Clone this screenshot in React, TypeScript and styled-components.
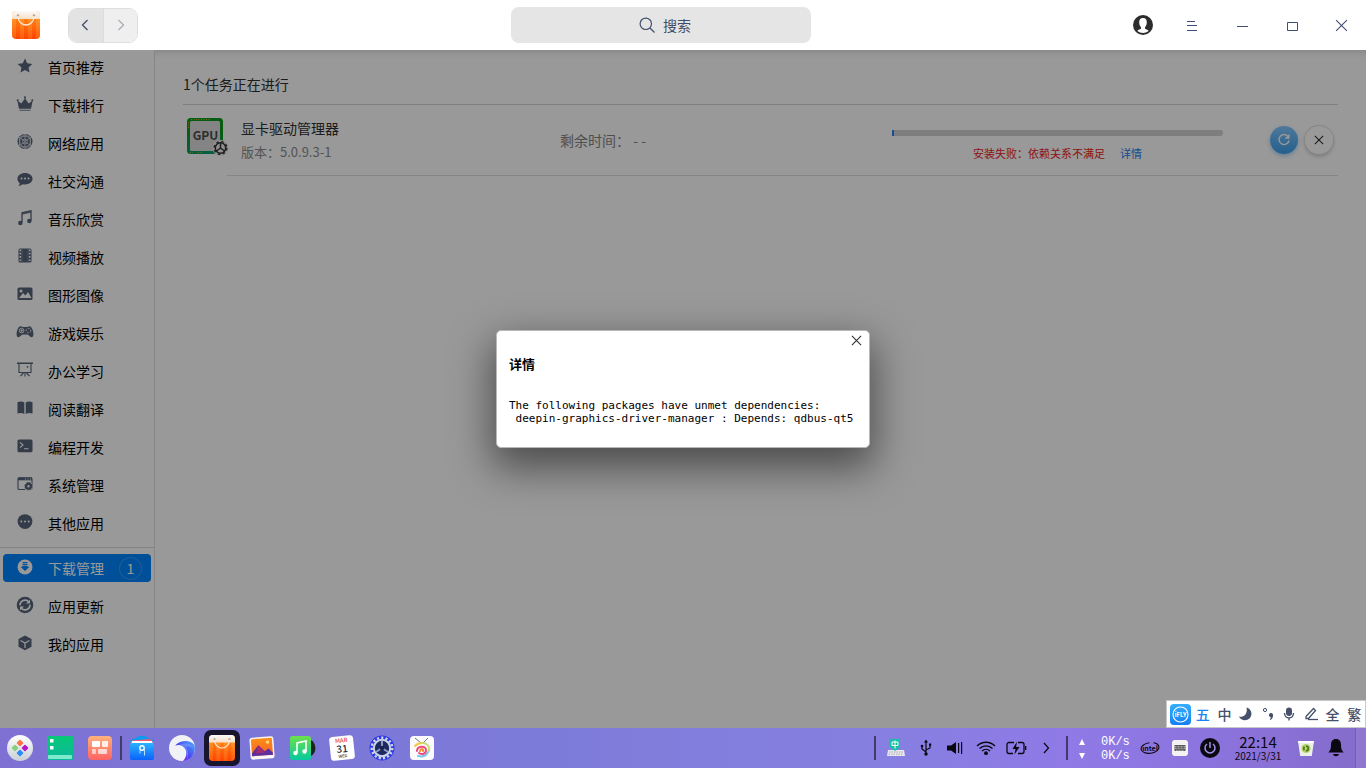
import React from "react";
import styled, { createGlobalStyle } from "styled-components";

const sans = `"Noto Sans CJK SC", "Noto Sans", sans-serif`;
const mono = `"DejaVu Sans Mono", monospace`;

const GlobalStyle = createGlobalStyle`
  *, *::before, *::after { box-sizing: border-box; }
  body { margin: 0; background: #fff; font-family: ${sans}; font-size: 14px; line-height: 20px; color: #000; }
  button { font: inherit; color: inherit; border: 0; padding: 0; background: none; cursor: pointer; }
  svg { display: block; flex: none; }
`;

const Page = styled.div`
  min-height: 100vh;
  display: flex;
  flex-direction: column;
`;

/* ---------- title bar ---------- */

const TitleBar = styled.header`
  height: 50px;
  flex: none;
  display: flex;
  align-items: center;
  background: #fff;
`;

const Brand = styled.div`
  width: 206px;
  flex: none;
  display: flex;
  align-items: center;
  gap: 28px;
  padding-left: 12px;
`;

const History = styled.div`
  display: flex;
  border-radius: 9px;
  overflow: hidden;
  border: 1px solid #dedede;
`;

const HistoryButton = styled.button<{ $active?: boolean }>`
  width: 34px;
  height: 33px;
  display: grid;
  place-items: center;
  background: ${(p) => (p.$active ? "#e3e3e3" : "#efefef")};
  color: ${(p) => (p.$active ? "#414d68" : "#a9adb8")};
  & + & { border-left: 1px solid #dcdcdc; }
`;

const SearchArea = styled.div`
  flex: 1;
  display: flex;
  justify-content: center;
`;

const SearchBox = styled.label`
  width: 300px;
  height: 36px;
  padding-left: 8px;
  display: flex;
  align-items: center;
  justify-content: center;
  gap: 8px;
  border-radius: 8px;
  background: #e5e5e5;
  color: #414d68;
`;

const SearchInput = styled.input`
  width: 28px;
  padding: 0;
  border: 0;
  outline: 0;
  background: none;
  font: 14px/20px ${sans};
  color: #414d68;
  &::placeholder { color: #414d68; opacity: 1; }
  &:focus { width: 220px; }
`;

const WindowTools = styled.div`
  width: 250px;
  flex: none;
  display: flex;
  justify-content: flex-end;
`;

const WindowButton = styled.button`
  width: 50px;
  height: 50px;
  display: grid;
  place-items: center;
  color: #414d78;
`;

/* ---------- store body ---------- */

const Body = styled.div`
  position: relative;
  flex: 1;
  display: flex;
`;

const Sidebar = styled.nav`
  width: 155px;
  flex: none;
  border-right: 1px solid #e0e0e0;
  padding: 3px 0 20px;
`;

const NavGroup = styled.div`
  display: flex;
  flex-direction: column;
  gap: 10px;
  padding: 0 3px;
  & + & { margin-top: 10px; padding-top: 6px; border-top: 1px solid #dcdcdc; }
`;

const NavItem = styled.a<{ $selected?: boolean }>`
  height: 28px;
  display: flex;
  align-items: center;
  gap: 14px;
  padding: 0 9px 0 13px;
  border-radius: 4px;
  text-decoration: none;
  color: ${(p) => (p.$selected ? "#fff" : "#000")};
  background: ${(p) => (p.$selected ? "#0084ff" : "transparent")};
  svg { color: ${(p) => (p.$selected ? "#fff" : "#566479")}; }
`;

const NavText = styled.span`
  flex: 1;
`;

const Count = styled.span`
  width: 23px;
  height: 23px;
  border: 1px solid #3f9ffb;
  border-radius: 50%;
  line-height: 20px;
  text-align: center;
`;

const Main = styled.main`
  flex: 1;
  min-width: 0;
  padding: 20px 28px;
  box-shadow: inset 0 8px 8px -8px rgba(0, 0, 0, 0.2);
`;

const Heading = styled.h1`
  margin: 0;
  padding: 4px 0 10px;
  border-bottom: 1px solid #d4d4d4;
  font-size: 14px;
  font-weight: 400;
  line-height: 20px;
  color: #303030;
`;

const Task = styled.article`
  display: grid;
  grid-template-columns: 58px 319fr 332fr 331fr 115px;
  align-items: center;
  height: 71px;
  padding-bottom: 2px;
  background: linear-gradient(#dedede, #dedede) 44px 100% / 100% 1px no-repeat;
`;

const AppIcon = styled.div`
  padding: 0 0 6px 3px;
`;

const AppName = styled.h2`
  margin: 0 0 4px;
  font-size: 14px;
  font-weight: 400;
  line-height: 20px;
  color: #303030;
`;

const Version = styled.p`
  margin: 0;
  font-size: 13px;
  line-height: 20px;
  color: #8c8c8c;
`;

const Remaining = styled.p`
  margin: 0;
  color: #848484;
`;

const Installation = styled.div`
  padding-top: 12px;
`;

const Progress = styled.div`
  height: 6px;
  border-radius: 0 3px 3px 0;
  overflow: hidden;
  background: #d2d2d2;
`;

const Bar = styled.div`
  height: 100%;
  background: #2a83f0;
`;

const Status = styled.p`
  margin: 9px 0 0;
  display: flex;
  justify-content: center;
  gap: 15px;
  font-size: 11px;
  line-height: 16px;
  color: #f01825;
  a { color: #1a80f0; text-decoration: none; }
`;

const Actions = styled.div`
  display: flex;
  justify-content: flex-end;
  gap: 7px;
  padding-right: 5px;
`;

const RoundButton = styled.button<{ $primary?: boolean }>`
  width: 28px;
  height: 28px;
  display: grid;
  place-items: center;
  border-radius: 50%;
  color: ${(p) => (p.$primary ? "#fff" : "#303030")};
  background: ${(p) => (p.$primary ? "linear-gradient(#84c8ff, #3a9fec)" : "#fff")};
  box-shadow: ${(p) => (p.$primary ? "0 2px 4px rgba(44, 147, 230, .4)" : "0 0 0 1px #e0e0e0, 0 2px 4px rgba(0, 0, 0, .25)")};
`;

const Backdrop = styled.div`
  position: absolute;
  inset: 0;
  display: grid;
  place-items: center;
  background: rgba(0, 0, 0, 0.4);
`;

const Dialog = styled.section`
  min-width: 374px;
  padding: 3px 12px 22px;
  border: 1px solid #b8b8b8;
  border-radius: 5px;
  background: #fff;
  box-shadow: 0 16px 40px 4px rgba(0, 0, 0, 0.5);
`;

const DialogBar = styled.div`
  display: flex;
  justify-content: flex-end;
  margin-right: -6px;
`;

const DialogClose = styled.button`
  width: 13px;
  height: 13px;
  display: grid;
  place-items: center;
  color: #303030;
`;

const DialogTitle = styled.h3`
  margin: 7px 0 25px;
  font-size: 13px;
  font-weight: 700;
  line-height: 20px;
`;

const Message = styled.pre`
  margin: 0;
  font: 11px/13px ${mono};
`;

const ImeBar = styled.div`
  position: absolute;
  right: 0;
  bottom: 0;
  width: 200px;
  height: 28px;
  padding-left: 3px;
  display: flex;
  align-items: center;
  background: #fff;
  border: 1px solid #c8c8c8;
`;

const ImeLogo = styled.div`
  margin-right: 1px;
`;

const ImeButton = styled.button<{ $active?: boolean }>`
  flex: 1;
  height: 26px;
  display: grid;
  place-items: center;
  font-size: 14px;
  font-weight: 500;
  line-height: 20px;
  color: ${(p) => (p.$active ? "#1a84f5" : "#46506a")};
`;

/* ---------- desktop dock ---------- */

const Dock = styled.footer`
  height: 40px;
  flex: none;
  display: flex;
  align-items: stretch;
  background: linear-gradient(90deg, #7f70d4 0%, #7b75d6 12%, #7d7bd9 40%, #8580e0 62%, #8f7ae6 78%, #8b73dc 90%, #846cca 100%);
`;

const DockGroup = styled.div`
  display: flex;
  align-items: center;
`;

const DockButton = styled.button`
  width: 40px;
  height: 40px;
  display: grid;
  place-items: center;
`;

const ActiveTile = styled.span`
  width: 36px;
  height: 36px;
  display: grid;
  place-items: center;
  border-radius: 7px;
  background: #18152c;
`;

const Divider = styled.span`
  width: 2px;
  height: 24px;
  background: #41396f;
`;

const Tray = styled.div`
  margin-left: auto;
  display: flex;
  align-items: center;
`;

const TrayGroup = styled.div`
  display: flex;
  padding: 0 5px;
`;

const TrayButton = styled.button`
  width: 30px;
  height: 40px;
  display: grid;
  place-items: center;
  color: #0b0812;
`;

const Speed = styled.div`
  width: 67px;
  padding-top: 1px;
  display: grid;
  grid-template-columns: 28px 1fr;
  align-items: center;
  justify-items: center;
  color: #fff;
  font: 12px/14px "Liberation Mono", monospace;
`;

const SpeedText = styled.span`
  justify-self: start;
  padding-left: 5px;
`;

const Clock = styled.div`
  width: 66px;
  display: flex;
  flex-direction: column;
  align-items: center;
  color: #0b0812;
`;

const Hour = styled.time`
  font-size: 15px;
  line-height: 16px;
`;

const Day = styled.time`
  font-size: 10px;
  line-height: 12px;
`;

const ShowDesktop = styled.button`
  width: 11px;
  height: 40px;
  margin-left: 4px;
  border-left: 1px solid #7160b4;
  background: rgba(255, 255, 255, 0.08);
`;

/* ---------- drawings ---------- */

const Glyph = ({ children }: { children: React.ReactNode }) => (
  <svg width="18" height="20" viewBox="0 0 18 20" fill="currentColor" aria-hidden="true">
    {children}
  </svg>
);

const stroke = (w: number) => ({ fill: "none", stroke: "currentColor", strokeWidth: w });
const cut = (w: number) => ({ fill: "none", stroke: "#fff", strokeWidth: w });

const glyphs: Record<string, React.ReactNode> = {
  star: <path d="M9 1.600l2.200 4.700 5.100.6-3.800 3.500 1 5.100L9 13l-4.500 2.500 1-5.100L1.700 6.900l5.100-.6z" />,
  crown: (
    <>
      <path d="M1.300 5.500l4 3L8.500 4V2h1v2l3.200 4.500 4-3-1.700 8.200H3z" />
      <circle cx="9" cy="2.200" r="1" /><circle cx="1.700" cy="5.300" r="1" /><circle cx="16.300" cy="5.300" r="1" />
      <path d="M3.500 14.700h11v1.200h-11z" opacity=".7" />
    </>
  ),
  net: (
    <>
      <circle cx="9" cy="8.500" r="7.500" />
      <g {...cut(0.8)} opacity=".8">
        <circle cx="9" cy="8.500" r="2.500" />
        <path d="M9 1.500l-5.500 3v8L9 15.500l5.500-3v-8zM3.500 4.500l11 8M14.500 4.500l-11 8M9 1.500v14" />
        <circle cx="9" cy="8.500" r="5.300" />
      </g>
    </>
  ),
  chat: (
    <>
      <path d="M9 2c4.300 0 7.500 2.500 7.500 5.800S13.300 13.500 9 13.500c-.9 0-1.800-.1-2.600-.3-1 .9-2.400 1.700-4 1.800.8-.8 1.200-1.700 1.300-2.800C2.300 11.100 1.500 9.600 1.500 7.800 1.500 4.500 4.700 2 9 2z" />
      <g fill="#fff"><circle cx="5.500" cy="7.500" r="1" /><circle cx="9" cy="7.500" r="1" /><circle cx="12.500" cy="7.500" r="1" /></g>
    </>
  ),
  music: (
    <>
      <path d="M6 13.500V3.800l9-2v10" {...stroke(1.3)} />
      <path d="M6 3.500l9-2v2.300l-9 2z" opacity=".8" />
      <circle cx="4.300" cy="14" r="2.200" /><circle cx="13.300" cy="12" r="2.200" />
    </>
  ),
  film: (
    <>
      <rect x="2.500" y="1.500" width="13" height="14" rx="1.500" />
      <path d="M4.300 2.500v12M13.700 2.500v12" {...cut(1.6)} strokeDasharray="1.700 1.600" />
      <path d="M6 1.500v14M12 1.500v14" {...cut(0.5)} opacity=".5" />
    </>
  ),
  image: (
    <>
      <rect x="1.500" y="2.500" width="15" height="12.500" rx="1.500" />
      <circle cx="5" cy="6" r="1.500" fill="#fff" />
      <path d="M3 13l4-5 2.500 2.500L12 7l3.500 6z" fill="#fff" />
    </>
  ),
  game: (
    <>
      <path d="M4.500 3.200c1.300 0 1.700.8 4.500.8s3.200-.8 4.500-.8c2.200 0 3.900 4.600 3.900 8 0 2-.7 3-1.800 3-1.900 0-2.700-2.700-4.600-2.700H7c-1.900 0-2.700 2.700-4.600 2.700-1.100 0-1.800-1-1.800-3 0-3.400 1.700-8 3.900-8z" />
      <g {...cut(0.9)}><circle cx="5.600" cy="7.600" r="2.300" /><path d="M4.400 7.600h2.400M5.600 6.400v2.400" /><circle cx="12.500" cy="7.600" r="2.300" strokeDasharray="1.800 1.200" /></g>
    </>
  ),
  board: (
    <>
      <path d="M1 1.500h16V3H1z" />
      <path d="M3 3v8.500h12V3M9 11.500v4M7.500 12l-3 3M10.500 12l3 3" {...stroke(1.1)} />
      <circle cx="11.500" cy="5.800" r=".9" />
    </>
  ),
  book: (
    <>
      <path d="M1.500 3.200C4 2.200 6.500 2.300 8.300 3.500v11.400c-2-1.200-4.500-1.200-6.800-.4z" />
      <path d="M16.500 3.200c-2.500-1-5-.9-6.800.3v11.400c2-1.200 4.500-1.200 6.800-.4z" />
    </>
  ),
  code: (
    <>
      <rect x="1.500" y="2.500" width="15" height="12.700" rx="1.500" />
      <path d="M4 5.300l3 2.700-3 2.700M8 11.800h4.500" {...cut(1.1)} />
    </>
  ),
  system: (
    <>
      <rect x="2" y="2.800" width="14" height="11.700" rx="1.200" {...stroke(1.1)} />
      <path d="M2 2.500h14v2.800H2z" />
      <path d="M9 4h1M11.500 4h1M14 4h1" {...cut(0.9)} />
      <circle cx="12.500" cy="11.200" r="4.500" fill="#fff" />
      <circle cx="12.500" cy="11.200" r="2.400" {...stroke(2.4)} />
      <circle cx="12.500" cy="11.200" r="3.700" {...stroke(1)} strokeDasharray="1.600 1.300" />
    </>
  ),
  more: (
    <>
      <circle cx="9" cy="8.600" r="7.400" />
      <g fill="#fff"><circle cx="5.300" cy="8.600" r="1" /><circle cx="9" cy="8.600" r="1" /><circle cx="12.700" cy="8.600" r="1" /></g>
    </>
  ),
  download: (
    <>
      <circle cx="9" cy="9" r="7.500" />
      <path d="M6.500 4h5v1.200h-5zM6.500 6h5v1.200h-5zM6.500 8h5v.8h2L9 13 4.500 8.800h2z" fill="#0084ff" />
    </>
  ),
  update: (
    <>
      <circle cx="9" cy="9" r="8.300" />
      <path d="M4 9.300a5 5 0 018.700-3.500M14 8.700a5 5 0 01-8.700 3.500" {...cut(1.6)} />
      <path d="M14 3.500v4h-4zM4 14.500v-4h4z" fill="#fff" />
    </>
  ),
  box: (
    <>
      <path d="M9 1.500l6.500 3.400v7.800L9 16.300l-6.500-3.600V4.900z" />
      <path d="M4.500 6.500L9 9l4.500-2.500M9 9v5" {...cut(1.2)} />
    </>
  ),
};

const Bag = ({ size }: { size: number }) => (
  <svg width={size} height={size} viewBox="0 0 28 28" aria-hidden="true">
    <defs>
      <linearGradient id="bag" x1="0" y1="0" x2="0" y2="1"><stop offset="0.2" stopColor="#ff9a2c" /><stop offset="1" stopColor="#ff5a0a" /></linearGradient>
      <linearGradient id="bagStripe" x1="0" y1="0" x2="0" y2="1"><stop offset="0" stopColor="#ff7a10" /><stop offset="1" stopColor="#ff3c00" /></linearGradient>
      <linearGradient id="bagTop" x1="0" y1="0" x2="0" y2="1"><stop offset="0" stopColor="#fcfaf8" /><stop offset="1" stopColor="#f6e0c8" /></linearGradient>
    </defs>
    <rect width="28" height="28" rx="4" fill="url(#bag)" />
    <path d="M4 8h4v20H4zM12 8h4v20h-4zM20 8h4v20h-4z" fill="url(#bagStripe)" opacity=".8" />
    <path d="M0 8V4a4 4 0 014-4h20a4 4 0 014 4v4z" fill="url(#bagTop)" />
    <circle cx="6" cy="4.500" r="1.200" fill="#b8a494" /><circle cx="22" cy="4.500" r="1.200" fill="#b8a494" />
    <path d="M6 5c0 12 16 12 16 0" fill="none" stroke="#ffe9d8" strokeWidth="1.300" />
  </svg>
);

const Cross = ({ size, width = 1 }: { size: number; width?: number }) => (
  <svg width={size} height={size} viewBox="0 0 12 12" aria-hidden="true">
    <path d="M1 1l10 10M11 1L1 11" {...stroke(width)} />
  </svg>
);

const GpuIcon = () => (
  <svg width="44" height="40" viewBox="0 0 44 40" role="img" aria-label="显卡驱动管理器">
    <defs><linearGradient id="chip" x1="0" y1="0" x2="0" y2="1"><stop offset="0.400" stopColor="#0c9a1c" /><stop offset="1" stopColor="#08a06c" /></linearGradient></defs>
    <rect x="1" y="1" width="36" height="36" rx="3.500" fill="url(#chip)" />
    <rect x="4" y="4" width="30" height="30" rx="1.500" fill="#dcdcdc" />
    <path d="M5 2.500h20M4 35.500h3M12 35.500h4M2.500 5v7" stroke="#c8b820" strokeWidth="1" strokeDasharray="1 1.500" />
    <text x="19.500" y="23" textAnchor="middle" fontFamily="Noto Sans CJK SC" fontSize="12" fontWeight="700" fill="#4c4c4c">GPU</text>
    <circle cx="34.500" cy="31" r="8" fill="#efefef" />
    <circle cx="34.500" cy="31" r="5.200" fill="none" stroke="#333" strokeWidth="1.500" />
    <circle cx="34.500" cy="31" r="6.400" fill="none" stroke="#333" strokeWidth="1.300" strokeDasharray="2.500 2.520" />
    <path d="M34.500 31v-5M34.500 31l-4 3M34.500 31l4 3" stroke="#333" strokeWidth="1.500" />
  </svg>
);

const Icon28 = ({ children }: { children: React.ReactNode }) => (
  <svg width="28" height="28" viewBox="0 0 28 28" aria-hidden="true">{children}</svg>
);

const Grad = ({ id, from, to }: { id: string; from: string; to: string }) => (
  <linearGradient id={id} x1="0" y1="0" x2="0" y2="1"><stop offset="0" stopColor={from} /><stop offset="1" stopColor={to} /></linearGradient>
);

const LauncherIcon = () => (
  <Icon28>
    <defs><Grad id="la" from="#fff" to="#c9cfd6" /></defs>
    <circle cx="14" cy="14" r="13" fill="url(#la)" />
    <g strokeWidth="1.600" strokeLinejoin="round">
      <path d="M14 6.500l2.500 2.500-2.500 2.500L11.500 9z" fill="#ff7342" stroke="#ff7342" />
      <path d="M9 11.500l2.500 2.500L9 16.500 6.500 14z" fill="#87cf7c" stroke="#87cf7c" />
      <path d="M19 11.500l2.500 2.500-2.500 2.500-2.500-2.500z" fill="#b813c8" stroke="#b813c8" />
      <path d="M14 16.500l2.500 2.500-2.500 2.500-2.500-2.500z" fill="#2c8af5" stroke="#2c8af5" />
    </g>
  </Icon28>
);

const DesktopIcon = () => (
  <Icon28>
    <defs><Grad id="de" from="#08c878" to="#0bb89c" /></defs>
    <rect x="1" y="2" width="26" height="24" rx="1.500" fill="url(#de)" />
    <path d="M4 5h3.500v3.500H4zM4 12h3.500v3.500H4z" fill="#fff" />
    <rect x="2" y="21" width="24" height="4" rx="1" fill="#7ceacb" />
  </Icon28>
);

const MultitaskIcon = () => (
  <Icon28>
    <defs><Grad id="mu" from="#ffb27c" to="#ff6264" /></defs>
    <rect x="2" y="2" width="24" height="24" rx="4" fill="url(#mu)" />
    <g fill="#fff"><rect x="6" y="7" width="8" height="6" rx="1" /><rect x="16" y="7" width="6" height="6" rx="1" opacity=".85" /><rect x="6" y="15" width="4" height="5" rx="1" opacity=".6" /><rect x="12" y="15" width="9" height="5" rx="1" opacity=".7" /></g>
  </Icon28>
);

const FilesIcon = () => (
  <Icon28>
    <defs><Grad id="fi" from="#2cb3ff" to="#0a62fb" /></defs>
    <path d="M2 8c0-2 3-3 6-4 4-3 8-3 12 0 3 1 6 2 6 4z" fill="#0a9cf0" />
    <path d="M4 6.500l18-1.500 3 3H3z" fill="#f55b6c" /><path d="M4 7h20l1 4H3z" fill="#fff" />
    <rect x="2" y="9" width="24" height="17" rx="2" fill="url(#fi)" />
    <circle cx="14" cy="14" r="2.200" fill="none" stroke="#fff" strokeWidth="1.400" />
    <path d="M12 16.500v3M16.500 15v6.500" stroke="#b9dfff" strokeWidth="1" />
  </Icon28>
);

const BrowserIcon = () => (
  <Icon28>
    <defs><linearGradient id="br" x1="0" y1="1" x2="1" y2="0"><stop offset="0" stopColor="#9a14f8" /><stop offset="0.500" stopColor="#4a4cf4" /><stop offset="1" stopColor="#4ab0f5" /></linearGradient></defs>
    <circle cx="14" cy="14" r="13" fill="#f1f2f6" />
    <path d="M7 12C11 6 22 5 26.500 11 28.500 20 22 27 15 27c4-4 5-11 0-14.500C12.500 10.500 9.500 10.500 7 12z" fill="url(#br)" />
    <path d="M12 10.500c5-2 12-1 14.800 4-3-2-6-2.500-9-1.500 3 3.500 3 8.500 1 13 1-6 0-12-6.800-15.500z" fill="#7fa4ff" opacity=".5" />
  </Icon28>
);

const PhotoIcon = () => (
  <Icon28>
    <defs><Grad id="ph" from="#ff8f15" to="#f2602c" /></defs>
    <g transform="rotate(-4 14 14)"><rect x="2" y="3" width="24" height="22" rx="2.500" fill="#fbf6f2" /><rect x="3.500" y="4.500" width="21" height="17" rx="1" fill="url(#ph)" /><path d="M3.500 19l7-8 6 6.500 4-2.500 4 4.500v2h-21z" fill="#5a2fa0" /><path d="M10.500 11l6 8h-9z" fill="#c5285e" opacity=".7" /><circle cx="20" cy="8.500" r="1.600" fill="#ffdc80" /></g>
  </Icon28>
);

const MusicIcon = () => (
  <Icon28>
    <defs><Grad id="ms" from="#6de04c" to="#06c9a0" /></defs>
    <circle cx="18" cy="14" r="9.500" fill="#16251f" />
    <rect x="2" y="2" width="21" height="24" rx="2.500" fill="url(#ms)" />
    <path d="M9 19V9l9-2v10" fill="none" stroke="#fff" strokeWidth="1.600" /><circle cx="7.500" cy="19" r="2.200" fill="#fff" /><circle cx="16.500" cy="17.500" r="2.200" fill="#fff" />
  </Icon28>
);

const CalendarIcon = () => (
  <Icon28>
    <g transform="rotate(-6 14 14)" fontFamily="Noto Sans CJK SC" textAnchor="middle" fontWeight="500">
      <rect x="2" y="2" width="24" height="24" rx="3.500" fill="#fff" />
      <text x="14" y="8.500" fontSize="6" fill="#e84a50">MAR</text>
      <text x="14" y="18.500" fontSize="10" fill="#25303c">31</text>
      <text x="14" y="23.500" fontSize="4" fill="#333">WED</text>
    </g>
  </Icon28>
);

const SettingsIcon = () => (
  <Icon28>
    <circle cx="14" cy="14" r="12.500" fill="#2b38e6" />
    <circle cx="14" cy="14" r="10.300" fill="none" stroke="#cfd4e6" strokeWidth="2.400" strokeDasharray="2.200 2.110" />
    <circle cx="14" cy="14" r="8.200" fill="#1c2a60" stroke="#cfd4e6" strokeWidth="2" />
    <path d="M14 14V6.500M14 14l-6 4M14 14l6 4" stroke="#8e9ac2" strokeWidth="2" /><circle cx="14" cy="14" r="2.300" fill="#18244e" />
  </Icon28>
);

const PaintIcon = () => (
  <Icon28>
    <rect x="2" y="2" width="24" height="24" rx="4" fill="#fbfbfd" />
    <path d="M7 4l6 5M20 4l-5 5" stroke="#777" strokeWidth="1" />
    <g fill="none" strokeWidth="2" strokeLinecap="round"><path d="M7 12c2-2 4-3 7-3" stroke="#f2c744" /><path d="M14 9c5 0 8 3 7 8" stroke="#c3df74" /><path d="M20 18c-2 4-6 5-10 4" stroke="#7ac4f0" /><path d="M9 17c0-5 9-6 9-1 0 4-4 5-7 3" stroke="#ef4a78" /><path d="M12 17c1-3 4-2 3 0" stroke="#f5892c" /></g>
  </Icon28>
);

const Sm = ({ w = 22, h = 22, children }: { w?: number; h?: number; children: React.ReactNode }) => (
  <svg width={w} height={h} viewBox={`0 0 ${w} ${h}`} fill="currentColor" aria-hidden="true">{children}</svg>
);

const menu = [
  ["star", "首页推荐"], ["crown", "下载排行"], ["net", "网络应用"], ["chat", "社交沟通"], ["music", "音乐欣赏"],
  ["film", "视频播放"], ["image", "图形图像"], ["game", "游戏娱乐"], ["board", "办公学习"], ["book", "阅读翻译"],
  ["code", "编程开发"], ["system", "系统管理"], ["more", "其他应用"],
];

const manage = [
  { icon: "download", text: "下载管理", count: 1 },
  { icon: "update", text: "应用更新" },
  { icon: "box", text: "我的应用" },
];

const dockApps: [string, React.ReactNode][] = [
  ["文件管理器", <FilesIcon />],
  ["浏览器", <BrowserIcon />],
  ["应用商店", <ActiveTile><Bag size={26} /></ActiveTile>],
  ["相册", <PhotoIcon />],
  ["音乐", <MusicIcon />],
  ["日历", <CalendarIcon />],
  ["控制中心", <SettingsIcon />],
  ["画板", <PaintIcon />],
];

const trayLeft: [string, React.ReactNode][] = [
  ["输入法", <Sm><path d="M3 13h16l1 6H2z" fill="#e9e9ee" /><path d="M4 15h14M3.500 17.200h15" stroke="#a6a4b4" strokeDasharray="1.500 1" /><path d="M5 2h10v8l-5 4-5-4z" fill="#12c2a4" /><path d="M7 5h6v3.500H7zM10 3.500v8" fill="none" stroke="#fff" strokeWidth="1" /></Sm>],
  ["USB", <Sm><path d="M11 4v12M11 15l-4-3V9M11 13l4-2V8" {...stroke(1.2)} /><path d="M11 2.500l2 3H9z" /><circle cx="11" cy="17" r="1.700" /><circle cx="7" cy="9" r="1.300" /><path d="M14 6.500h2.200v2.200H14z" /></Sm>],
  ["音量", <Sm><path d="M2 8.500h4L11 5v12l-5-3.500H2zM13 6h1.200v10H13zM16 5h1.200v12H16z" /></Sm>],
  ["无线网络", <Sm><g {...stroke(1.3)}><path d="M2 9c5-5 13-5 18 0M4.500 11.500c3.600-3.600 9.400-3.600 13 0M7 14c2.300-2.200 5.700-2.200 8 0" /></g><circle cx="11" cy="16.200" r="1.900" /></Sm>],
  ["电池", <Sm><path d="M9 5.500H4a2 2 0 00-2 2v7a2 2 0 002 2h4M13 5.500h4a2 2 0 012 2v7a2 2 0 01-2 2h-4M20.700 9v4" {...stroke(1.3)} /><path d="M12 4.500L7.500 12h3L9.500 17.500 14.500 10h-3.400z" /></Sm>],
  ["展开", <Sm><path d="M9 6l4.500 5L9 16" {...stroke(1.2)} /></Sm>],
];

const imeButtons: [string, React.ReactNode][] = [
  ["五笔", "五"],
  ["中文", "中"],
  ["半角", <Sm w={16} h={16}><path d="M8.500 1.500a6.500 6.500 0 11-7.500 9c4.500 1.500 9-2.500 7.500-9z" /></Sm>],
  ["标点", <Sm w={16} h={16}><circle cx="5" cy="4" r="1.600" {...stroke(1)} /><path d="M9 8.500a2 2 0 014 1c0 2-1 3.500-2.700 4.500l-.6-.8c.8-.7 1.200-1.200 1.200-1.900-1.300 0-2.200-1.400-1.900-2.800z" /></Sm>],
  ["语音", <Sm w={16} h={16}><rect x="5" y="1.500" width="6" height="8.500" rx="3" /><path d="M3.500 7c0 6.500 9 6.500 9 0M8 12v2.500" {...stroke(1.4)} /></Sm>],
  ["手写", <Sm w={16} h={16}><path d="M3 10.500l7.500-8 2 2-7 8H3z" {...stroke(1.3)} /><path d="M5 13.500h10" {...stroke(1.3)} /></Sm>],
  ["全角", "全"],
  ["繁体", "繁"],
];

export default function App() {
  return (
    <Page>
      <GlobalStyle />
      <TitleBar>
        <Brand>
          <Bag size={28} />
          <History>
            <HistoryButton $active aria-label="后退">
              <Sm w={12} h={12}><path d="M7.500 1l-5 5 5 5" {...stroke(1.3)} /></Sm>
            </HistoryButton>
            <HistoryButton aria-label="前进">
              <Sm w={12} h={12}><path d="M3.500 1l5 5-5 5" {...stroke(1.3)} /></Sm>
            </HistoryButton>
          </History>
        </Brand>
        <SearchArea>
          <SearchBox>
            <Sm w={16} h={16}><circle cx="6.800" cy="6.800" r="5.700" {...stroke(1.2)} /><path d="M11 11l4.500 4.500" {...stroke(1.2)} /></Sm>
            <SearchInput placeholder="搜索" aria-label="搜索" />
          </SearchBox>
        </SearchArea>
        <WindowTools>
          <WindowButton aria-label="账户">
            <Sm w={24} h={20}>
              <g transform="translate(4 0)">
                <circle cx="10" cy="10" r="10" fill="#2c2c2c" />
                <path d="M10 3c2.600 0 3.800 1.600 3.800 4.200 0 2-.6 3.800-1.800 5v1.500c1.500.7 3.200 1.200 3.600 2.300-3 2.600-8.200 2.600-11.200 0 .4-1.100 2.100-1.600 3.600-2.300v-1.500c-1.200-1.200-1.800-3-1.800-5C6.200 4.600 7.400 3 10 3z" fill="#fff" />
              </g>
            </Sm>
          </WindowButton>
          <WindowButton aria-label="菜单">
            <Sm w={14} h={12}><path d="M3 2.500h8M3 6.500h10M3 11.500h10" {...stroke(1)} /></Sm>
          </WindowButton>
          <WindowButton aria-label="最小化">
            <Sm w={14} h={12}><path d="M3 7.500h11" {...stroke(1)} /></Sm>
          </WindowButton>
          <WindowButton aria-label="最大化">
            <Sm w={14} h={12}><path d="M3.500 3.500h10v8h-10z" {...stroke(1)} /></Sm>
          </WindowButton>
          <WindowButton aria-label="关闭"><Cross size={13} /></WindowButton>
        </WindowTools>
      </TitleBar>

      <Body>
        <Sidebar aria-label="应用分类">
          <NavGroup>
            {menu.map(([icon, text]) => (
              <NavItem href="#" key={icon}>
                <Glyph>{glyphs[icon]}</Glyph>
                <NavText>{text}</NavText>
              </NavItem>
            ))}
          </NavGroup>
          <NavGroup>
            {manage.map((m) => (
              <NavItem href="#" key={m.icon} $selected={!!m.count}>
                <Glyph>{glyphs[m.icon]}</Glyph>
                <NavText>{m.text}</NavText>
                {m.count && <Count>{m.count}</Count>}
              </NavItem>
            ))}
          </NavGroup>
        </Sidebar>

        <Main>
          <Heading>1个任务正在进行</Heading>
          <Task>
            <AppIcon><GpuIcon /></AppIcon>
            <div>
              <AppName>显卡驱动管理器</AppName>
              <Version>版本：5.0.9.3-1</Version>
            </div>
            <Remaining>剩余时间： - -</Remaining>
            <Installation>
              <Progress role="progressbar" aria-valuenow={1} aria-label="安装进度"><Bar style={{ width: "0.6%" }} /></Progress>
              <Status><span>安装失败：依赖关系不满足</span><a href="#">详情</a></Status>
            </Installation>
            <Actions>
              <RoundButton $primary aria-label="重试">
                <Sm w={14} h={14}><path d="M10.800 3.200A5 5 0 1012 7.500" {...stroke(1.4)} /><path d="M12.500.8v5h-5z" /></Sm>
              </RoundButton>
              <RoundButton aria-label="取消"><Cross size={10} width={1.3} /></RoundButton>
            </Actions>
          </Task>
        </Main>

        <Backdrop>
          <Dialog role="dialog" aria-labelledby="detail-title">
            <DialogBar><DialogClose aria-label="关闭"><Cross size={11} width={1.2} /></DialogClose></DialogBar>
            <DialogTitle id="detail-title">详情</DialogTitle>
            <Message>{"The following packages have unmet dependencies:\n deepin-graphics-driver-manager : Depends: qdbus-qt5"}</Message>
          </Dialog>
        </Backdrop>

        <ImeBar>
          <ImeLogo>
            <Sm w={21} h={21}>
              <defs><Grad id="ime" from="#35aefc" to="#1480f4" /></defs>
              <rect width="21" height="21" rx="4" fill="url(#ime)" />
              <circle cx="10.500" cy="10.500" r="7.500" fill="none" stroke="#fff" strokeWidth="1.100" />
              <text x="10.500" y="12.800" fontSize="6" fontWeight="700" textAnchor="middle" fill="#fff">iFLY</text>
            </Sm>
          </ImeLogo>
          {imeButtons.map(([label, face], i) => (
            <ImeButton key={label} aria-label={label} $active={i === 0}>{face}</ImeButton>
          ))}
        </ImeBar>
      </Body>

      <Dock>
        <DockGroup>
          <DockButton aria-label="启动器"><LauncherIcon /></DockButton>
          <DockButton aria-label="显示桌面"><DesktopIcon /></DockButton>
          <DockButton aria-label="多任务视图"><MultitaskIcon /></DockButton>
          <Divider />
          {dockApps.map(([label, icon]) => (
            <DockButton key={label} aria-label={label}>{icon}</DockButton>
          ))}
        </DockGroup>
        <Tray>
          <Divider />
          <TrayGroup>
            {trayLeft.map(([label, icon]) => (
              <TrayButton key={label} aria-label={label}>{icon}</TrayButton>
            ))}
          </TrayGroup>
          <Divider />
          <Speed>
            <Sm w={6} h={20}><path d="M3 0l3 6H0zM3 20l3-6H0z" /></Sm>
            <SpeedText>0K/s<br />0K/s</SpeedText>
          </Speed>
          <TrayButton aria-label="显卡">
            <Sm w={20} h={14}>
              <ellipse cx="10" cy="7" rx="9" ry="5.300" {...stroke(1.1)} transform="rotate(-8 10 7)" strokeDasharray="34 4" />
              <text x="10" y="9.500" fontSize="7" fontWeight="700" textAnchor="middle">intel</text>
            </Sm>
          </TrayButton>
          <TrayButton aria-label="屏幕键盘">
            <Sm w={18} h={18}>
              <rect x="1" y="1" width="16" height="16" rx="3" fill="#f4f2f2" />
              <rect x="3.500" y="6" width="11" height="6" fill="#5c5a5c" />
              <path d="M4 7.700h10M4 9.300h10M5 11.300h8" stroke="#f4f2f2" strokeWidth=".6" strokeDasharray="1 .5" />
            </Sm>
          </TrayButton>
          <TrayButton aria-label="电源">
            <Sm w={20} h={20}><circle cx="10" cy="10" r="10" /><path d="M7 6a5 5 0 106 0M10 4v6" fill="none" stroke="#a391e6" strokeWidth="1.500" /></Sm>
          </TrayButton>
          <Clock><Hour>22:14</Hour><Day>2021/3/31</Day></Clock>
          <TrayButton aria-label="回收站">
            <Sm w={16} h={16}>
              <path d="M0 1h16l-2.200 15H2.200z" fill="#eceeea" /><path d="M0 1h16v2H0z" fill="#fff" />
              <circle cx="8" cy="8.500" r="4.600" fill="#b9d468" /><circle cx="8" cy="8.500" r="2.300" fill="none" stroke="#4e7a24" strokeWidth="1.800" strokeDasharray="3.500 1.300" />
            </Sm>
          </TrayButton>
          <TrayButton aria-label="通知">
            <Sm w={16} h={18}><path d="M8 0c3.500 0 5 2.500 5 6 0 4 .8 5.500 2.700 7.500H.3C2.200 11.500 3 10 3 6c0-3.500 1.500-6 5-6zM5 15h6c-.5 3-5.500 3-6 0z" /></Sm>
          </TrayButton>
          <ShowDesktop aria-label="显示桌面" />
        </Tray>
      </Dock>
    </Page>
  );
}
